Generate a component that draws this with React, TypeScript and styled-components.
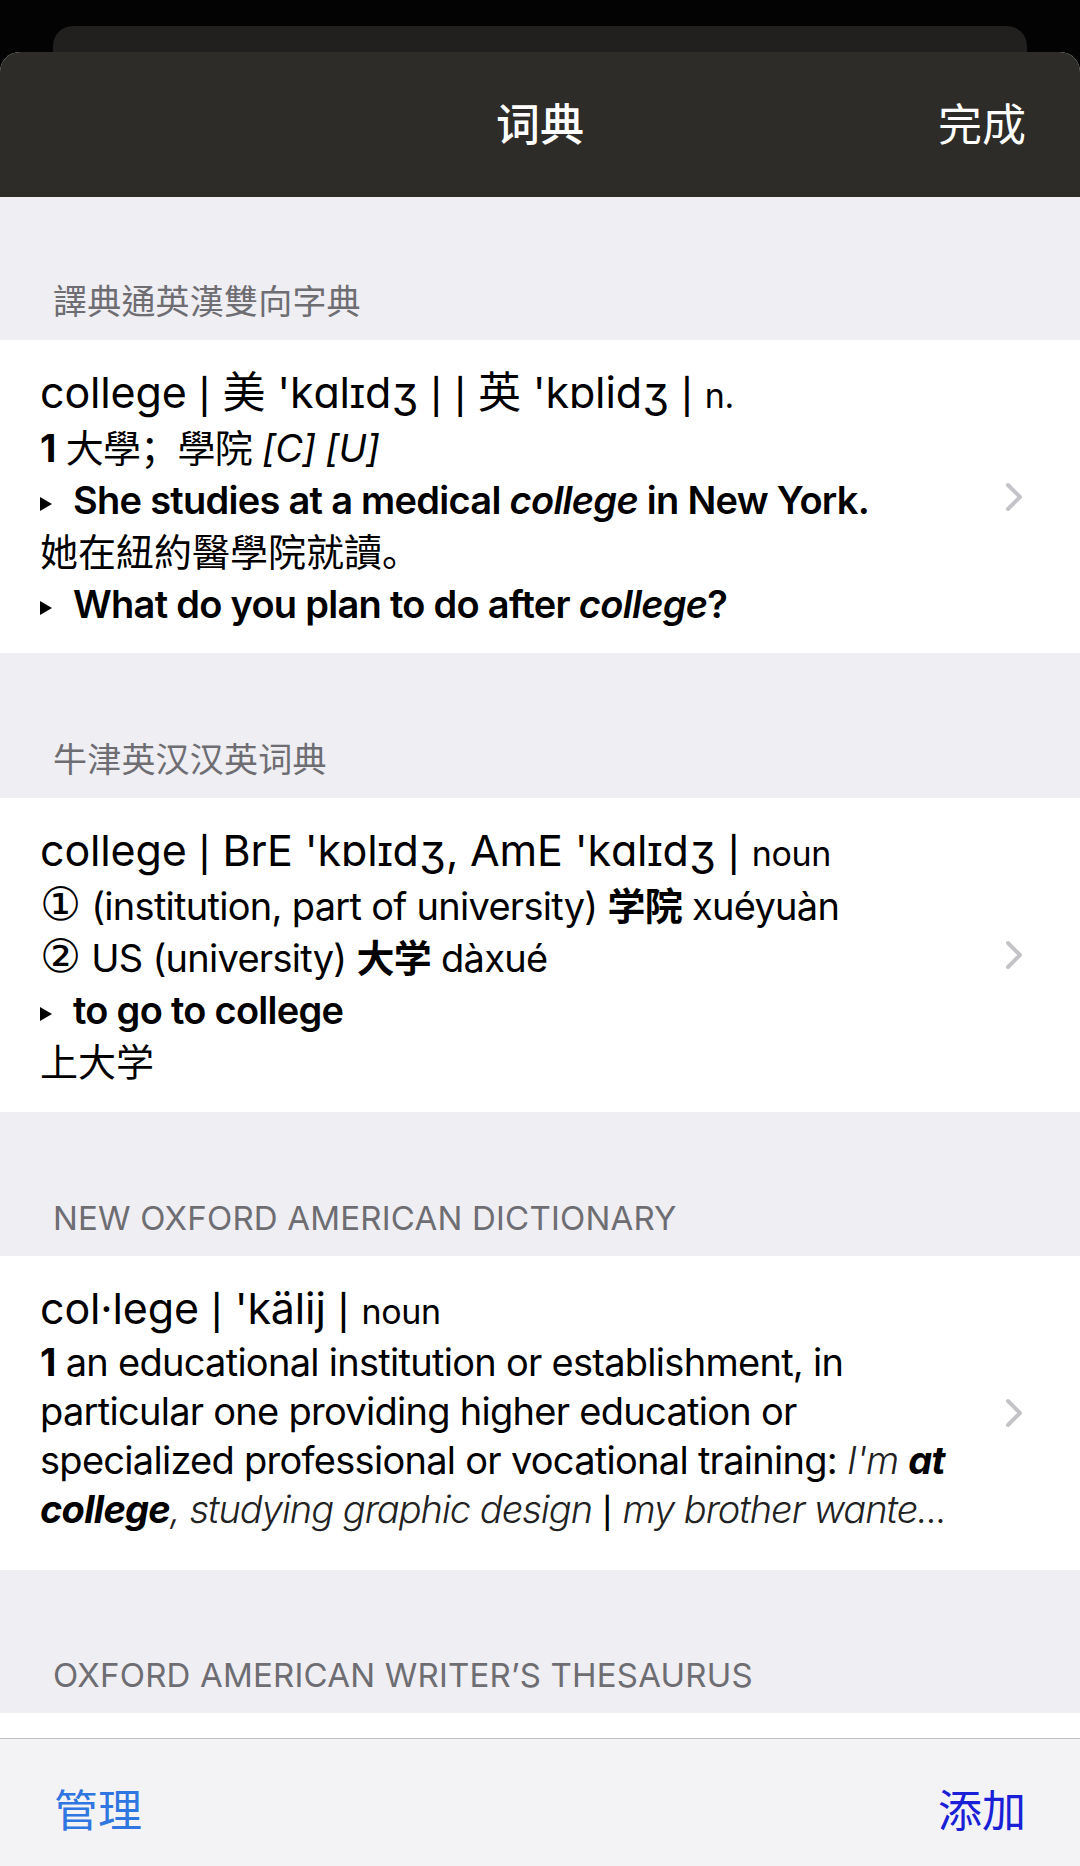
import React from "react";
import styled, { createGlobalStyle } from "styled-components";

const GlobalStyle = createGlobalStyle`
  html, body { margin: 0; padding: 0; background: #000; }
  body { font-family: Inter, "Noto Sans CJK SC", sans-serif; -webkit-font-smoothing: antialiased; }
  * { box-sizing: border-box; }
`;

const Screen = styled.div`
  width: 1080px;
  height: 1866px;
  background: #030303;
  display: flex;
  flex-direction: column;
  overflow: hidden;
`;

const BackCard = styled.div`
  margin: 26px 53px 0;
  height: 26px;
  flex: none;
  background: #21201e;
  border-radius: 20px 20px 0 0;
`;

const Sheet = styled.div`
  flex: 1;
  min-height: 0;
  display: flex;
  flex-direction: column;
  background: #efeef3;
  border-radius: 20px 20px 0 0;
  overflow: hidden;
`;

const NavBar = styled.header`
  flex: none;
  height: 145px;
  background: #2d2c29;
  display: grid;
  grid-template-columns: 1fr auto 1fr;
  align-items: center;
  padding: 0 54px 5px;
  color: #fff;
`;

const NavTitle = styled.div`
  font-family: "Noto Sans CJK SC", sans-serif;
  font-size: 44px;
  font-weight: 500;
  line-height: 50px;
`;

const NavAction = styled.div`
  justify-self: end;
  font-family: "Noto Sans CJK SC", sans-serif;
  font-size: 44px;
  font-weight: 400;
  line-height: 50px;
`;

const List = styled.main`
  flex: 1;
  min-height: 0;
  overflow: hidden;
  display: flex;
  flex-direction: column;
`;

const SectionHeader = styled.div<{ $h: number; $size?: number }>`
  flex: none;
  height: ${(p) => p.$h}px;
  display: flex;
  align-items: flex-end;
  padding: 0 53px 18px;
  color: #6d6d72;
  font-size: ${(p) => p.$size ?? 33}px;
  line-height: 40px;
  letter-spacing: 0.2px;
`;

const Card = styled.section<{ $h: number }>`
  flex: none;
  height: ${(p) => p.$h}px;
  background: #fff;
  display: flex;
  align-items: flex-start;
  padding: 26px 57px 0 40px;
  position: relative;
`;

const CardBody = styled.div`
  flex: 1;
  min-width: 0;
  color: #000;
  font-size: 38px;
  letter-spacing: -0.72px;
`;

const Line = styled.div<{ $lh?: number; $cjk?: boolean }>`
  line-height: ${(p) => p.$lh ?? 52}px;
  white-space: nowrap;
  letter-spacing: ${(p) => (p.$cjk ? "0" : "inherit")};
`;

const Head = styled.span`
  font-size: 43px;
  letter-spacing: -0.15px;
`;

const Pos = styled.span`
  font-size: 34px;
  letter-spacing: -0.3px;
`;

const Pipe = styled.span`
  font-size: 0.8em;
  font-weight: 500;
  letter-spacing: 0;
  position: relative;
  top: 0.02em;
`;

const Circled = styled.span`
  font-family: "DejaVu Sans", sans-serif;
  font-size: 46px;
  line-height: 0;
  letter-spacing: 0;
`;

const B = styled.b`
  font-weight: 700;
`;

const Semi = styled.span`
  font-weight: 600;
`;

const I = styled.i`
  font-style: italic;
`;

const LightI = styled.i`
  font-style: italic;
  font-weight: 300;
  color: #222;
  letter-spacing: -1px;
`;

const Paragraph = styled.div`
  line-height: 49px;
`;

const Bullet = styled.span`
  display: inline-block;
  width: 0;
  height: 0;
  border-left: 12px solid #000;
  border-top: 7.5px solid transparent;
  border-bottom: 7.5px solid transparent;
  margin-right: 21px;
  vertical-align: 3px;
`;

const ChevronWrap = styled.div`
  position: absolute;
  right: 57px;
  top: 50%;
  transform: translateY(-50%);
  width: 18px;
  height: 30px;
  display: flex;
`;

const PeekStrip = styled.div`
  flex: none;
  height: 40px;
  background: #fff;
`;

const Toolbar = styled.footer`
  flex: none;
  height: 128px;
  border-top: 1px solid #bdbdc2;
  background: #f3f3f6;
  display: flex;
  justify-content: space-between;
  align-items: flex-start;
  padding: 47px 54px 0;
`;

const ToolButton = styled.div<{ $color: string }>`
  font-family: "Noto Sans CJK SC", sans-serif;
  font-size: 44px;
  line-height: 44px;
  color: ${(p) => p.$color};
`;

const Chevron = () => (
  <ChevronWrap>
    <svg width="18" height="30" viewBox="0 0 18 30">
      <polyline
        points="3,3 15,15 3,27"
        fill="none"
        stroke="#c4c4c8"
        strokeWidth="4"
        strokeLinecap="round"
        strokeLinejoin="round"
      />
    </svg>
  </ChevronWrap>
);

const P = () => <Pipe>|</Pipe>;

export default function App() {
  return (
    <>
      <GlobalStyle />
      <Screen>
        <BackCard />
        <Sheet>
          <NavBar>
            <span />
            <NavTitle>词典</NavTitle>
            <NavAction>完成</NavAction>
          </NavBar>
          <List>
            <SectionHeader $h={143} $size={34} lang="zh-Hant">
              譯典通英漢雙向字典
            </SectionHeader>
            <Card $h={313}>
              <CardBody>
                <Line>
                  <Head>
                    college <P /> 美 'kɑlɪdʒ <P /> <P /> 英 'kɒlidʒ <P />{" "}
                  </Head>
                  <Pos>n.</Pos>
                </Line>
                <Line>
                  <B>1</B> 大學；學院 <I>[C] [U]</I>
                </Line>
                <Line>
                  <Bullet />
                  <Semi>
                    She studies at a medical <I>college</I> in New York.
                  </Semi>
                </Line>
                <Line $cjk>她在紐約醫學院就讀。</Line>
                <Line>
                  <Bullet />
                  <Semi>
                    What do you plan to do after <I>college</I>?
                  </Semi>
                </Line>
              </CardBody>
              <Chevron />
            </Card>

            <SectionHeader $h={145} $size={34}>
              牛津英汉汉英词典
            </SectionHeader>
            <Card $h={314}>
              <CardBody>
                <Line>
                  <Head>
                    college <P /> BrE 'kɒlɪdʒ, AmE 'kɑlɪdʒ <P />{" "}
                  </Head>
                  <Pos>noun</Pos>
                </Line>
                <Line>
                  <Circled>①</Circled> (institution, part of university) <B>学院</B> xuéyuàn
                </Line>
                <Line>
                  <Circled>②</Circled> US (university) <B>大学</B> dàxué
                </Line>
                <Line>
                  <Bullet />
                  <Semi>to go to college</Semi>
                </Line>
                <Line $cjk>上大学</Line>
              </CardBody>
              <Chevron />
            </Card>

            <SectionHeader $h={144}>NEW OXFORD AMERICAN DICTIONARY</SectionHeader>
            <Card $h={314}>
              <CardBody>
                <Line>
                  <Head>
                    col·lege <P /> 'kälij <P />{" "}
                  </Head>
                  <Pos>noun</Pos>
                </Line>
                <Paragraph>
                  <Line $lh={49}>
                    <B>1</B> an educational institution or establishment, in
                  </Line>
                  <Line $lh={49}>particular one providing higher education or</Line>
                  <Line $lh={49}>
                    specialized professional or vocational training: <LightI>I'm</LightI>{" "}
                    <B>
                      <I>at</I>
                    </B>
                  </Line>
                  <Line $lh={49}>
                    <B>
                      <I>college</I>
                    </B>
                    <LightI>, studying graphic design</LightI> <P /> <LightI>my brother wante...</LightI>
                  </Line>
                </Paragraph>
              </CardBody>
              <Chevron />
            </Card>

            <SectionHeader $h={143}>OXFORD AMERICAN WRITER’S THESAURUS</SectionHeader>
            <PeekStrip />
          </List>
          <Toolbar>
            <ToolButton $color="#2f76e0">管理</ToolButton>
            <ToolButton $color="#1a20d6">添加</ToolButton>
          </Toolbar>
        </Sheet>
      </Screen>
    </>
  );
}
